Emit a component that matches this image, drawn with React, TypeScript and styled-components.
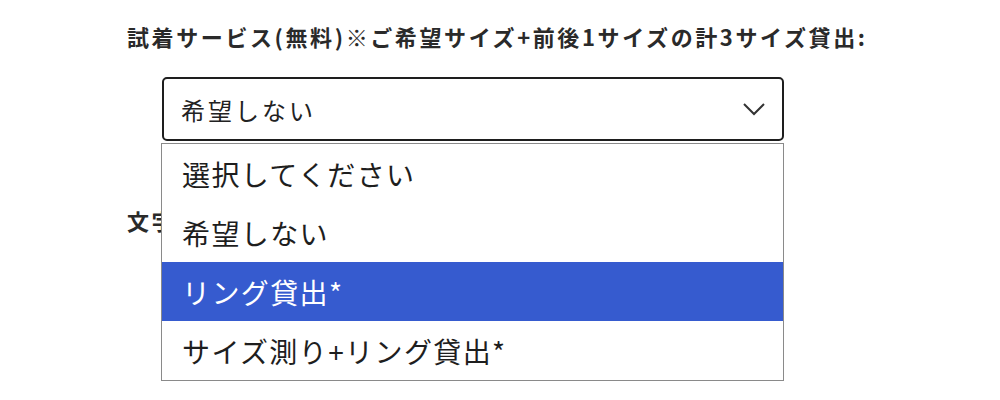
import styled, { createGlobalStyle } from 'styled-components';

const GlobalStyle = createGlobalStyle`
  html, body, #root {
    margin: 0;
    padding: 0;
    min-height: 400px;
    background: #ffffff;
  }
  body {
    font-family: "Noto Sans CJK JP", "Noto Sans", sans-serif;
    color: #222222;
  }
`;

const options = ['選択してください', '希望しない', 'リング貸出*', 'サイズ測り+リング貸出*'];
const selected = 2;

const App = () => {
  return (
    <>
      <GlobalStyle />
      <Form>
        <Field>
          <Label>試着サービス(無料)※ご希望サイズ+前後1サイズの計3サイズ貸出:</Label>
          <SelectWrap>
            <SelectBox>
              <SelectValue>希望しない</SelectValue>
              <Chevron width="24" height="14" viewBox="0 0 24 14">
                <polyline points="2,2 12,12 22,2" fill="none" stroke="#333" strokeWidth="2" />
              </Chevron>
            </SelectBox>
            <Listbox>
              {options.map((opt, i) => (
                <Option key={opt} $active={i === selected}>
                  {opt}
                </Option>
              ))}
            </Listbox>
          </SelectWrap>
        </Field>
        <Field>
          <Label>文字入れ(刻印):</Label>
        </Field>
      </Form>
    </>
  );
};

export default App;

const Form = styled.div`
  display: flex;
  flex-direction: column;
  gap: 64px;
  padding: 21px 0 0 127px;
`;

const Field = styled.div`
  display: flex;
  flex-direction: column;
  gap: 26px;
`;

const Label = styled.div`
  font-size: 22px;
  font-weight: 700;
  line-height: 30px;
  letter-spacing: 2.6px;
  color: #2a2a2a;
`;

const SelectWrap = styled.div`
  position: relative;
  margin-left: 35px;
  width: 622px;
`;

const SelectBox = styled.div`
  box-sizing: border-box;
  height: 64px;
  border: 2.5px solid #1e1e1e;
  border-radius: 5px;
  display: flex;
  align-items: center;
  justify-content: space-between;
  padding: 0 16px 0 17px;
  background: #fff;
`;

const SelectValue = styled.span`
  font-size: 24px;
  letter-spacing: 3px;
  color: #222;
`;

const Chevron = styled.svg`
  display: block;
`;

const Listbox = styled.ul`
  position: absolute;
  top: 66px;
  left: -1px;
  width: 623px;
  box-sizing: border-box;
  margin: 0;
  padding: 0;
  list-style: none;
  border: 1px solid #8a8a8a;
  background: #fff;
  z-index: 10;
`;

const Option = styled.li<{ $active: boolean }>`
  height: 59px;
  display: flex;
  align-items: center;
  padding-left: 20px;
  font-size: 28px;
  letter-spacing: 1.4px;
  background: ${({ $active }) => ($active ? '#365bcf' : '#fff')};
  color: ${({ $active }) => ($active ? '#ffffff' : '#1e1e1e')};
`;
